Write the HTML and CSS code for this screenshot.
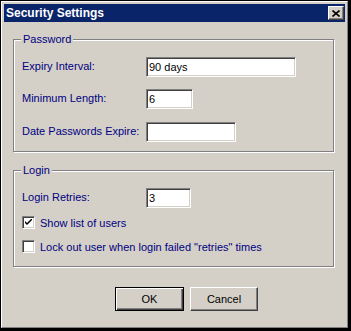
FILE: index.html
```html
<!DOCTYPE html>
<html>
<head>
    <title>Security Settings</title>
    <link rel="stylesheet" href="styles.css">
</head>
<body>
    <div class="window">
        <div class="frame">
            <div class="titlebar">
                <span class="title">Security Settings</span>
                <button class="close" type="button" aria-label="Close">
                    <svg width="8" height="7" viewBox="0 0 8 7">
                        <path d="M0.5 0.5 L7.5 6.5 M7.5 0.5 L0.5 6.5" stroke="#000" stroke-width="1.6" fill="none"/>
                    </svg>
                </button>
            </div>

            <div class="content">
                <div class="group password">
                    <span class="legend">Password</span>
                    <div class="row">
                        <label for="expiry">Expiry Interval:</label>
                        <input type="text" id="expiry" class="w-wide" value="90 days">
                    </div>
                    <div class="row">
                        <label for="min_length">Minimum Length:</label>
                        <input type="text" id="min_length" class="w-short" value="6">
                    </div>
                    <div class="row row-last">
                        <label for="expire_date">Date Passwords Expire:</label>
                        <input type="text" id="expire_date" class="w-mid" value="">
                    </div>
                </div>

                <div class="group login">
                    <span class="legend">Login</span>
                    <div class="row">
                        <label for="retries">Login Retries:</label>
                        <input type="text" id="retries" class="w-tiny" value="3">
                    </div>
                    <div class="check first">
                        <span class="box">
                            <svg width="7" height="7" viewBox="0 0 7 7">
                                <path d="M0 2 L0 4 L2 6 L7 1 L7 -1 L2 4 Z" fill="#000"/>
                            </svg>
                        </span>
                        <span>Show list of users</span>
                    </div>
                    <div class="check">
                        <span class="box"></span>
                        <span>Lock out user when login failed "retries" times</span>
                    </div>
                </div>

                <div class="buttons">
                    <button type="button" class="btn default">OK</button>
                    <button type="button" class="btn">Cancel</button>
                </div>
            </div>
        </div>
    </div>
</body>
</html>
```

FILE: styles.css
```css
* {
    box-sizing: border-box;
    margin: 0;
    padding: 0;
}

body {
    font-family: 'Liberation Sans', Arial, sans-serif;
    font-size: 11px;
    background: #000;
}

.window {
    width: 351px;
    height: 331px;
    border-style: solid;
    border-width: 1px 3px 3px 1px;
    border-color: #000;
    background: #d4d0c8;
}

.frame {
    height: 100%;
    border: 1px solid;
    border-color: #fff #808080 #808080 #fff;
    padding: 2px;
}

.titlebar {
    height: 18px;
    background: #0a246a;
    display: flex;
    align-items: center;
    padding-left: 2px;
}

.title {
    color: #fff;
    font-weight: bold;
    font-size: 12px;
}

.close {
    margin-left: auto;
    margin-right: 1px;
    width: 16px;
    height: 14px;
    background: #d4d0c8;
    border: 1px solid;
    border-color: #fff #404040 #404040 #fff;
    box-shadow: inset -1px -1px 0 #808080;
    display: flex;
    align-items: center;
    justify-content: center;
}

.close svg {
    display: block;
}

.content {
    padding: 17px 11px 0 9px;
    color: #000080;
}

.group {
    position: relative;
    border: 1px solid #808080;
    box-shadow: 1px 1px 0 #fff, inset 1px 1px 0 #fff;
    padding: 17px 0 0 8px;
}

.password {
    height: 113px;
}

.login {
    height: 97px;
    margin-top: 18px;
}

.legend {
    position: absolute;
    top: -7px;
    left: 7px;
    padding: 0 2px;
    line-height: 13px;
    background: #d4d0c8;
}

.row {
    display: flex;
    align-items: center;
    height: 20px;
}

.row + .row {
    margin-top: 12px;
}

.row.row-last {
    margin-top: 13px;
}

.row label {
    width: 124px;
    padding-bottom: 2px;
}

input[type="text"] {
    height: 20px;
    border: 1px solid;
    border-color: #808080 #fff #fff #808080;
    box-shadow: inset 1px 1px 0 #404040, inset -1px -1px 0 #d4d0c8;
    background: #fff;
    font-family: inherit;
    font-size: 11px;
    color: #000;
    padding: 0 2px;
    outline: none;
}

.w-wide { width: 150px; }
.w-mid { width: 90px; }
.w-short { width: 47px; }
.w-tiny { width: 45px; }

.check {
    display: flex;
    align-items: center;
    gap: 5px;
    margin-top: 11px;
    height: 13px;
}

.check.first {
    margin-top: 8px;
}

.box {
    width: 13px;
    height: 13px;
    border: 1px solid;
    border-color: #808080 #fff #fff #808080;
    box-shadow: inset 1px 1px 0 #404040, inset -1px -1px 0 #d4d0c8;
    background: #fff;
    display: flex;
    align-items: center;
    justify-content: center;
}

.box svg {
    display: block;
}

.buttons {
    display: flex;
    gap: 6px;
    margin-top: 20px;
    padding-left: 102px;
}

.btn {
    width: 68px;
    height: 24px;
    background: #d4d0c8;
    border: 1px solid;
    border-color: #fff #404040 #404040 #fff;
    box-shadow: inset -1px -1px 0 #808080;
    font-family: inherit;
    font-size: 11px;
    color: #000;
}

.btn.default {
    width: 69px;
    border-color: #000;
    box-shadow: inset 1px 1px 0 #fff, inset -1px -1px 0 #404040, inset -2px -2px 0 #808080;
}
```
